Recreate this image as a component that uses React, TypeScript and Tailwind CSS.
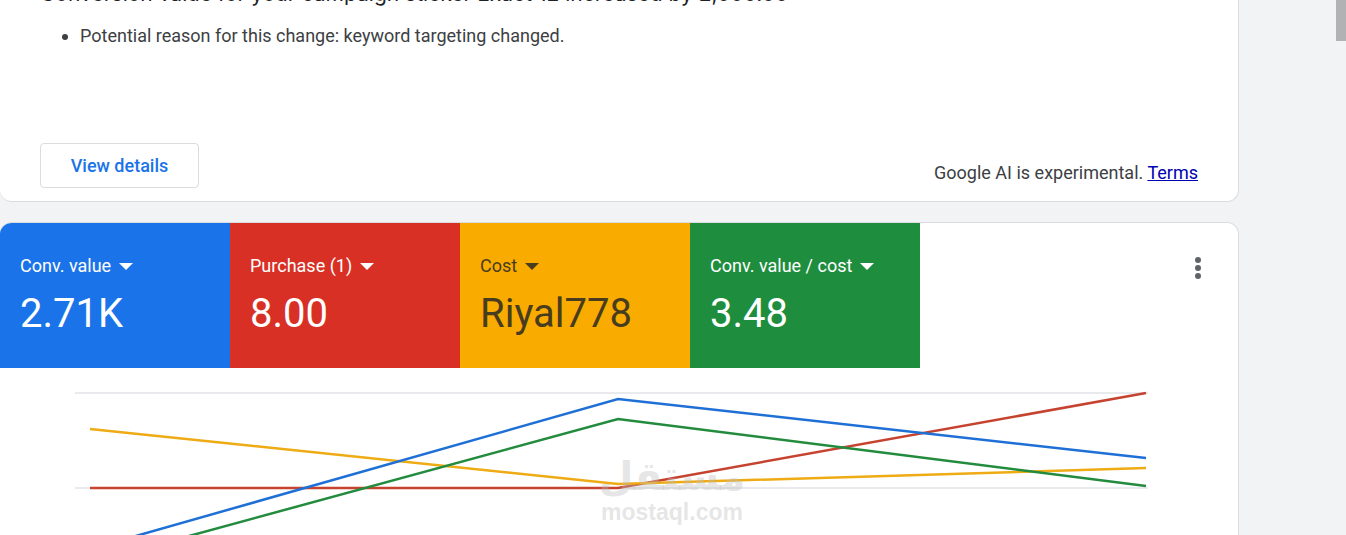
import { clsx } from "clsx";

const metrics = [
  { label: "Conv. value", value: "2.71K", tone: "bg-[#1a73e8] text-white" },
  { label: "Purchase (1)", value: "8.00", tone: "bg-[#d93025] text-white" },
  { label: "Cost", value: "Riyal778", tone: "bg-[#f9ab00] text-[#483c1f]" },
  { label: "Conv. value / cost", value: "3.48", tone: "bg-[#1e8e3e] text-white" },
];

const series = [
  { name: "Purchase", color: "#c5432f", points: "90,120 618,120 1146,25" },
  { name: "Cost", color: "#eeab13", points: "90,61 618,116 1146,100" },
  { name: "Conv. value", color: "#1f70d6", points: "90,181 618,31 1146,90" },
  { name: "Conv. value / cost", color: "#228b3d", points: "90,195 618,51 1146,118" },
];

const gridLines = [25, 120, 215];

const InsightCard = () => {
  return (
    <section className="bg-white border border-t-0 border-l-0 border-[#dadce0] rounded-b-xl px-10 pb-[13px]">
      <h2 className="-mt-[18px] text-[21px] leading-6 font-['Inter',sans-serif] text-[#202124]">
        Conversion value for your campaign sticker Exact 12 increased by 2,000.00
      </h2>
      <ul className="mt-[18px] pl-10 list-disc text-lg leading-6 text-[#3c4043]">
        <li>Potential reason for this change: keyword targeting changed.</li>
      </ul>
      <div className="mt-[95px] flex items-start justify-between">
        <button
          type="button"
          className="h-[45px] w-[159px] border border-[#dadce0] rounded-sm font-medium text-lg text-[#1a73e8]"
        >
          View details
        </button>
        <p className="pt-4 text-lg text-[#3c4043]">
          Google AI is experimental.{" "}
          <a href="#terms" className="text-[#0000b4] underline">
            Terms
          </a>
        </p>
      </div>
    </section>
  );
};

const Chart = () => {
  return (
    <div className="relative">
      <svg viewBox="0 0 1238 240" className="block w-full" role="img" aria-label="Performance over time">
        {gridLines.map((y) => (
          <line key={y} x1="75" x2="1148" y1={y} y2={y} stroke="#e8eaed" strokeWidth="2" />
        ))}
        {series.map((s) => (
          <polyline key={s.name} points={s.points} fill="none" stroke={s.color} strokeWidth="2.5" />
        ))}
      </svg>
      {/* Watermark */}
      <div className="absolute top-[84px] left-[602px] w-[140px] flex flex-col items-center font-bold text-[#bdbdbd]/40 pointer-events-none">
        <p lang="ar" dir="rtl" className="font-['DejaVu_Sans',sans-serif] text-[40px] leading-[48px]">
          مستقل
        </p>
        <p className="font-['Liberation_Sans',sans-serif] text-[23px] leading-6">mostaql.com</p>
      </div>
    </div>
  );
};

const ScorecardPanel = () => {
  return (
    <section className="shrink-0 bg-white border border-l-0 border-[#dadce0] rounded-xl overflow-hidden">
      <div className="flex items-start justify-between">
        <div className="flex">
          {metrics.map((m) => (
            <div key={m.label} className={clsx("h-[145px] w-[230px] px-5 pt-[31px]", m.tone)}>
              <button type="button" className="flex items-center gap-2 text-lg leading-6">
                {m.label}
                <svg viewBox="0 0 14 7" className="w-3.5 h-[7px]" fill="currentColor">
                  <path d="M0 0h14L7 7z" />
                </svg>
              </button>
              <p className="mt-2 text-[40px] leading-[56px]">{m.value}</p>
            </div>
          ))}
        </div>
        <button type="button" aria-label="More options" className="mt-[34px] mr-[37px]">
          <svg viewBox="0 0 6 22" className="w-1.5 h-[22px]" fill="#5f6368">
            <circle cx="3" cy="3" r="3" />
            <circle cx="3" cy="11" r="3" />
            <circle cx="3" cy="19" r="3" />
          </svg>
        </button>
      </div>
      <Chart />
    </section>
  );
};

export default function App() {
  return (
    <div className="flex h-screen overflow-hidden bg-[#f1f3f4] font-['Roboto',sans-serif]">
      <main className="flex-1 mr-[97px] flex flex-col gap-5">
        <InsightCard />
        <ScorecardPanel />
      </main>
      {/* Scrollbar */}
      <div className="w-2.5">
        <div className="h-[41px] bg-[#b1b2b4]" />
      </div>
    </div>
  );
}
